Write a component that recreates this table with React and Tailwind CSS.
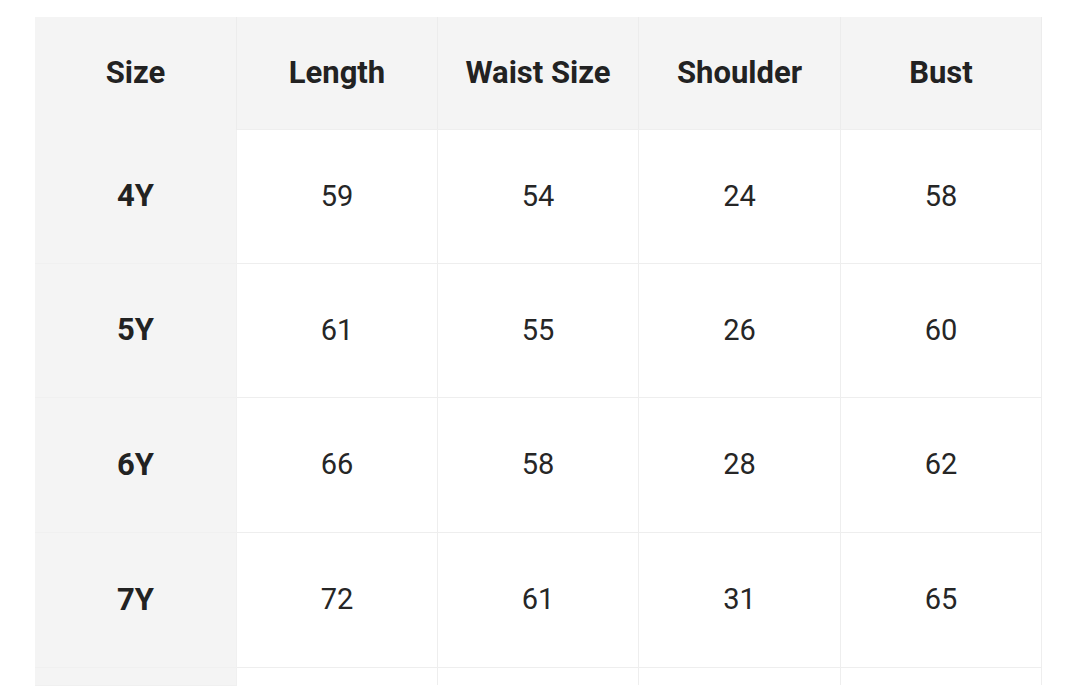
import React from 'react';

const headers = ['Size', 'Length', 'Waist Size', 'Shoulder', 'Bust'];

const rows = [
  { size: '4Y', values: ['59', '54', '24', '58'], h: 'h-[134px]' },
  { size: '5Y', values: ['61', '55', '26', '60'], h: 'h-[134px]' },
  { size: '6Y', values: ['66', '58', '28', '62'], h: 'h-[135px]' },
  { size: '7Y', values: ['72', '61', '31', '65'], h: 'h-[135px]' },
  { size: '', values: ['', '', '', ''], h: 'h-[18px]' },
];

// Size chart table
const App = () => {
  return (
    <div className="h-[686px] overflow-hidden bg-white pt-[17px] pl-[35px]" style={{ fontFamily: 'Roboto, "Liberation Sans", sans-serif' }}>
      <div className="grid grid-cols-[202px_201px_201px_202px_201px] w-[1007px]">
        {headers.map((h) => (
          <div
            key={h}
            className="h-[113px] flex items-center justify-center bg-[#f4f4f4] border-r border-[#ececec] text-[31px] font-bold text-[#222]"
          >
            {h}
          </div>
        ))}
        {rows.map((r, idx) => (
          <React.Fragment key={idx}>
            <div className={`${r.h} flex items-center justify-center bg-[#f4f4f4] border-b border-r border-[#f0f0f0] text-[31px] font-bold text-[#222]`}>
              {r.size}
            </div>
            {r.values.map((v, i) => (
              <div
                key={i}
                className={`${r.h} flex items-center justify-center bg-white border-t border-r border-[#eeeeee] -mt-px text-[29px] text-[#262626]`}
              >
                {v}
              </div>
            ))}
          </React.Fragment>
        ))}
      </div>
    </div>
  );
};

export default App;
